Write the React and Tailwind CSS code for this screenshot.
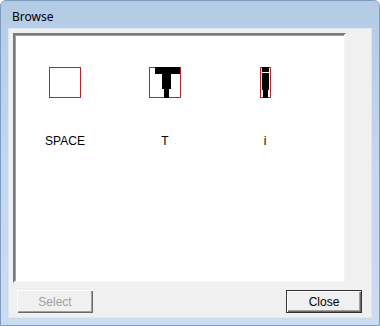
import React from 'react';

const RED = '#b3262c';

function SpaceGlyph() {
  return (
    <svg width="32" height="31" viewBox="0 0 32 31">
      <rect x="0.5" y="0.5" width="31" height="30" fill="none" stroke={RED} />
    </svg>
  );
}

function TGlyph() {
  return (
    <svg width="33" height="31" viewBox="0 0 33 31">
      <rect x="0.5" y="0.5" width="31" height="30" fill="none" stroke={RED} />
      <rect x="6" y="0" width="25" height="7" fill="#000" />
      <rect x="13" y="7" width="9" height="15" fill="#000" />
      <rect x="15" y="22" width="5" height="9" fill="#000" />
    </svg>
  );
}

function IGlyph() {
  return (
    <svg width="11" height="31" viewBox="0 0 11 31">
      <rect x="0.5" y="0.5" width="10" height="30" fill="none" stroke={RED} />
      <rect x="2" y="0" width="7" height="5" fill="#000" />
      <rect x="2" y="6" width="7" height="17" fill="#000" />
      <rect x="3" y="23" width="5" height="8" fill="#000" />
    </svg>
  );
}

const items = [
  { label: 'SPACE', glyph: <SpaceGlyph /> },
  { label: 'T', glyph: <TGlyph /> },
  { label: 'i', glyph: <IGlyph /> },
];

export default function App() {
  return (
    <div className="w-[380px] h-[326px] rounded-t-[6px] border border-[#7d9cc0] bg-gradient-to-b from-[#b4cbe6] via-[#c3d7ee] to-[#cadcf0] px-[7px] pb-[7px] flex flex-col overflow-hidden">
      <div className="h-[27px] shrink-0 pt-[8px] pl-[4px] text-[12px] leading-[16px] text-black" style={{ fontFamily: '"Noto Sans", "Open Sans", sans-serif' }}>
        Browse
      </div>
      <div className="flex-1 bg-[#f0f0f0] border border-[#dde8f4] flex flex-col" style={{ fontFamily: '"Liberation Sans", Arial, sans-serif' }}>
        <div className="mt-[4px] ml-[4px] w-[333px] h-[250px] bg-white border-2 border-t-[#7a7a7a] border-l-[#7a7a7a] border-r-[#f4f4f4] border-b-[#f4f4f4] shadow-[inset_1px_1px_#a0a0a0] flex items-start">
          {items.map((it) => (
            <div key={it.label} className="w-[100px] flex flex-col items-center pt-[32px]">
              <div className="h-[31px] flex items-start">{it.glyph}</div>
              <div className="mt-[36px] text-[12px] leading-[14px] text-black">{it.label}</div>
            </div>
          ))}
        </div>
        <div className="flex justify-between mt-[7px] pl-[8px] pr-[9px]">
          <button className="w-[76px] h-[23px] bg-[#f0f0f0] text-[12px] text-[#a0a0a0] shadow-[inset_1px_1px_#ffffff,inset_-1px_-1px_#696969,inset_-2px_-2px_#a0a0a0]">
            Select
          </button>
          <button className="w-[76px] h-[23px] bg-[#f0f0f0] text-[12px] text-black border border-[#333] shadow-[inset_1px_1px_#ffffff,inset_-1px_-1px_#696969,inset_-2px_-2px_#a0a0a0]">
            Close
          </button>
        </div>
      </div>
    </div>
  );
}
